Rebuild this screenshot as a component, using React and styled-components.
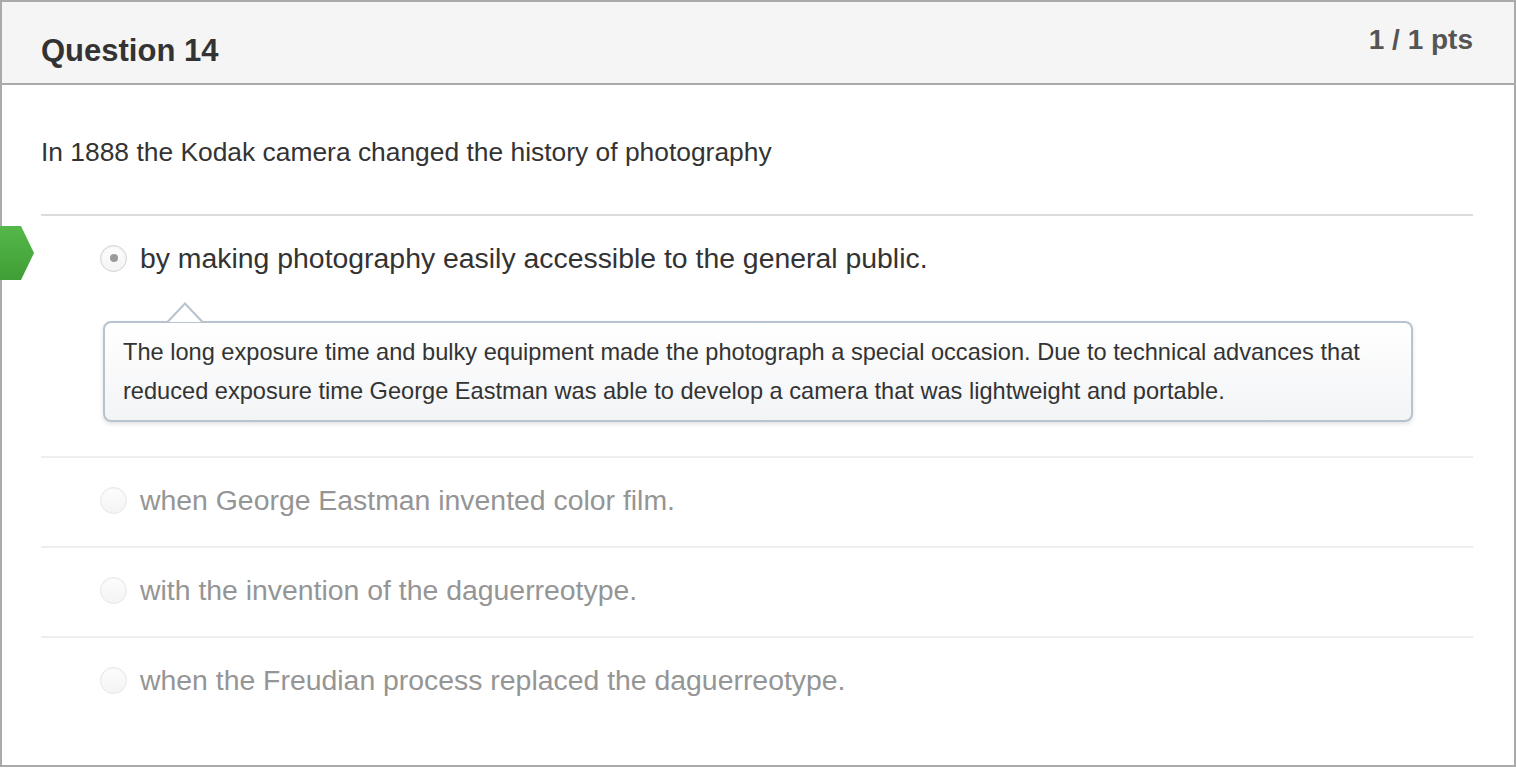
import React from 'react'
import styled, { createGlobalStyle } from 'styled-components'

const question = {
	number: 14,
	points: '1 / 1 pts',
	text: 'In 1888 the Kodak camera changed the history of photography',
	answers: [
		{
			text: 'by making photography easily accessible to the general public.',
			selected: true,
			comment: 'The long exposure time and bulky equipment made the photograph a special occasion. Due to technical advances that reduced exposure time George Eastman was able to develop a camera that was lightweight and portable.',
		},
		{ text: 'when George Eastman invented color film.' },
		{ text: 'with the invention of the daguerreotype.' },
		{ text: 'when the Freudian process replaced the daguerreotype.' },
	],
}

const GlobalStyle = createGlobalStyle`
	html, body {
		margin: 0;
		padding: 0;
		background: #fff;
	}
	body {
		font-family: "Liberation Sans", Arial, Helvetica, sans-serif;
		color: #333;
	}
`

const App = () => {
	return (
		<>
			<GlobalStyle />
			<Card>
				<Header>
					<Title>Question {question.number}</Title>
					<Points>{question.points}</Points>
				</Header>
				<Body>
					<QuestionText>{question.text}</QuestionText>
					<AnswerList>
						{question.answers.map((answer, i) => (
							<AnswerRow key={`answer_${i}`} $first={i === 0}>
								{answer.selected && <CorrectMarker />}
								<AnswerLine>
									<Radio $selected={answer.selected} />
									<AnswerText $selected={answer.selected}>{answer.text}</AnswerText>
								</AnswerLine>
								{answer.comment && <Comment>{answer.comment}</Comment>}
							</AnswerRow>
						))}
					</AnswerList>
				</Body>
			</Card>
		</>
	)
}

const Card = styled.div`
	position: relative;
	box-sizing: border-box;
	width: 100%;
	border: 2px solid #aaa;
	background: #fff;
`

const Header = styled.div`
	box-sizing: border-box;
	height: 83px;
	display: flex;
	justify-content: space-between;
	align-items: flex-start;
	padding: 24px 41px 0 39px;
	background: #f5f5f5;
	border-bottom: 2px solid #aaa;
`

const Title = styled.h2`
	margin: 9px 0 0;
	font-size: 31px;
	line-height: 31px;
	font-weight: bold;
	color: #333;
`

const Points = styled.div`
	font-size: 28px;
	line-height: 28px;
	font-weight: bold;
	color: #555;
`

const Body = styled.div`
	padding: 48px 41px 39px 39px;
`

const QuestionText = styled.p`
	margin: 0 0 42px;
	font-size: 26.4px;
	line-height: 39px;
	color: #333;
`

const AnswerList = styled.div`
	display: flex;
	flex-direction: column;
`

const AnswerRow = styled.div`
	border-top: 2px solid ${(p) => (p.$first ? '#dcdcdc' : '#eeeeee')};
	padding: 25px 0 ${(p) => (p.$first ? '34px' : '29px')};
`

const CorrectMarker = styled.div`
	position: absolute;
	left: -2px;
	margin-top: -15px;
	width: 34px;
	height: 54px;
	background: linear-gradient(#55b84a, #3f9e35);
	clip-path: polygon(0 0, 21px 0, 34px 50%, 21px 100%, 0 100%);
`

const AnswerLine = styled.div`
	display: flex;
	align-items: center;
	height: 34px;
	padding-left: 59px;
	gap: 13px;
`

const Radio = styled.span`
	position: relative;
	box-sizing: border-box;
	flex: none;
	width: 27px;
	height: 27px;
	border-radius: 50%;
	border: 1px solid ${(p) => (p.$selected ? '#d2d2d2' : '#e6e6e6')};
	background: linear-gradient(#fdfdfd, #f4f4f4);
	box-shadow: inset 0 1px 2px rgba(0, 0, 0, ${(p) => (p.$selected ? 0.06 : 0.03)});

	&::after {
		content: '';
		display: ${(p) => (p.$selected ? 'block' : 'none')};
		position: absolute;
		left: 50%;
		top: 50%;
		width: 8px;
		height: 8px;
		margin: -4px 0 0 -4px;
		border-radius: 50%;
		background: #9a9a9a;
	}
`

const AnswerText = styled.span`
	font-size: 28.4px;
	line-height: 34px;
	color: ${(p) => (p.$selected ? '#333' : '#959595')};
	white-space: nowrap;
`

const Comment = styled.div`
	position: relative;
	margin: 46px 60px 0 62px;
	padding: 10px 20px 9px 18px;
	border: 2px solid #b7c3ce;
	border-radius: 8px;
	background: linear-gradient(#ffffff, #f3f4f6);
	box-shadow: 0 2px 4px rgba(0, 0, 0, 0.12);
	font-size: 23.6px;
	line-height: 39px;
	color: #333;

	&::before,
	&::after {
		content: '';
		position: absolute;
		width: 0;
		height: 0;
		border-style: solid;
		border-top: none;
	}
	&::before {
		left: 62px;
		top: -21px;
		border-width: 0 18px 19px;
		border-color: transparent transparent #b7c3ce;
	}
	&::after {
		left: 64px;
		top: -18px;
		border-width: 0 16px 17px;
		border-color: transparent transparent #fff;
	}
`

export default App
